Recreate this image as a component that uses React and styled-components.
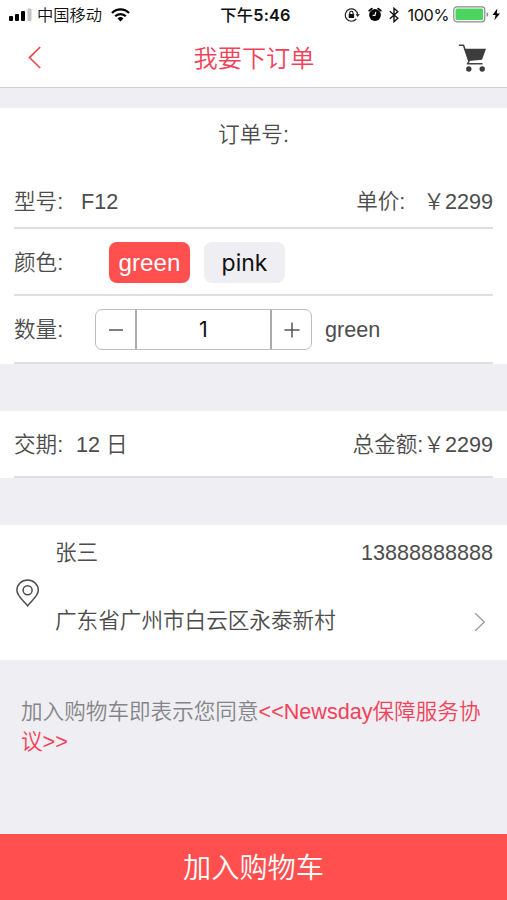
import React, { useState } from "react";
import styled, { createGlobalStyle } from "styled-components";

const red = "#ff4f4f";
const linkRed = "#f2425a";
const pageGray = "#eeeef3";
const textGray = "#4c4c4c";
const sidePadding = "14px";

const GlobalStyle = createGlobalStyle`
  body {
    margin: 0;
    background-color: ${pageGray};
  }

  * {
    box-sizing: border-box;
  }
`;

const Screen = styled.div`
  display: flex;
  flex-direction: column;
  width: 507px;
  height: 900px;
  overflow: hidden;
  background-color: ${pageGray};
  color: ${textGray};
  font-family: "Liberation Sans", "Noto Sans CJK SC", sans-serif;
  font-size: 21.6px;
  font-weight: 350;
  line-height: 30px;
  white-space: nowrap;
`;

const StatusBar = styled.div`
  display: grid;
  grid-template-columns: 1fr auto 1fr;
  align-items: center;
  height: 29px;
  flex-shrink: 0;
  padding: 0 7px 0 9px;
  background-color: #fff;
  color: #111;
  font-family: Inter, "Noto Sans CJK SC", sans-serif;
  font-size: 16.3px;
  line-height: 28px;
`;

const StatusGroup = styled.div`
  display: flex;
  align-items: center;
  justify-content: ${(props) => (props.$end ? "flex-end" : "flex-start")};
  height: 28px;

  svg {
    display: block;
    flex-shrink: 0;
  }
`;

const Carrier = styled.span`
  margin: 0 9px 0 5px;
  font-weight: 350;
`;

const Clock = styled.span`
  margin-left: 2px;
  font-weight: 500;
  letter-spacing: 0.2px;

  b {
    font-size: 16.3px;
    font-weight: 600;
  }
`;

const Percent = styled.span`
  margin: 0 4px 0 8px;
  font-size: 16.3px;
  font-weight: 400;
  letter-spacing: -0.4px;
`;

const NavBar = styled.div`
  display: flex;
  align-items: center;
  justify-content: space-between;
  height: 59px;
  flex-shrink: 0;
  padding: 0 20px 1px 28px;
  border-bottom: 1px solid #cfcfd3;
  background-color: #fff;

  svg {
    display: block;
  }
`;

const Title = styled.h1`
  margin: 2px 0 0 9px;
  color: ${linkRed};
  font-size: 24.2px;
  font-weight: 350;
  line-height: 36px;
`;

const IconButton = styled.button`
  display: flex;
  padding: 0;
  border: 0;
  background: none;
`;

const Card = styled.div`
  flex-shrink: 0;
  margin-top: ${(props) => props.$gap}px;
  padding: 0 ${sidePadding};
  background-color: #fff;
`;

const OrderNumber = styled.div`
  height: 68px;
  padding-top: 12px;
  text-align: center;
`;

const Row = styled.div`
  display: flex;
  align-items: center;
  height: ${(props) => props.$height || 67}px;
  padding-top: ${(props) => props.$top ?? 2}px;
  border-bottom: 2px solid #dfdfe1;
`;

const Label = styled.span`
  width: ${(props) => props.$width}px;
`;

const RightText = styled.span`
  margin-left: auto;
`;

const Price = styled.span`
  margin-left: 18px;
`;

const ColorOption = styled.button`
  width: 81px;
  height: 41px;
  margin-right: 14px;
  padding: ${(props) => (props.$active ? 1 : 0)}px 0 0;
  border: 0;
  border-radius: 8px;
  background-color: ${(props) => (props.$active ? red : pageGray)};
  color: ${(props) => (props.$active ? "#fff" : "#111")};
  font-family: ${(props) =>
    props.$active ? '"Liberation Sans"' : "Inter"}, sans-serif;
  font-size: ${(props) => (props.$active ? 24.2 : 23)}px;
`;

const Stepper = styled.div`
  display: flex;
  width: 217px;
  height: 41px;
  margin-right: 13px;
  border: 1.5px solid #bdbdbd;
  border-radius: 7px;
`;

const StepButton = styled.button`
  display: flex;
  align-items: center;
  justify-content: center;
  width: 39px;
  padding: 0;
  border: 0;
  background: none;
`;

const Amount = styled.div`
  flex: 1;
  border: solid #ababab;
  border-width: 0 2px;
  color: #111;
  font-family: Inter, sans-serif;
  font-size: 21.6px;
  font-weight: 400;
  line-height: 38px;
  text-align: center;
`;

const Address = styled.div`
  display: grid;
  grid-template-columns: 41px 1fr;
  align-items: center;
  height: 135px;
`;

const AddressBody = styled.div`
  display: flex;
  flex-direction: column;
  justify-content: space-between;
  height: 135px;
  padding: 13px 0 24px;
`;

const AddressLine = styled.div`
  display: flex;
  align-items: center;
  justify-content: space-between;
`;

const ArrowBox = styled.span`
  display: flex;
  margin: 1px 7px 0 0;
`;

const Agreement = styled.p`
  flex: 1;
  margin: 0;
  padding: 37px 22px 0 21px;
  color: #858588;
  white-space: normal;
  word-break: break-all;
`;

const AgreementLink = styled.span`
  color: ${linkRed};
`;

const SubmitButton = styled.button`
  height: 66px;
  flex-shrink: 0;
  padding: 0 0 3px;
  border: 0;
  background-color: ${red};
  color: #fff;
  font-family: inherit;
  font-size: 28.2px;
  font-weight: 350;
`;

const SignalIcon = () => (
  <svg width="23" height="14" viewBox="0 0 23 14">
    <rect x="0" y="8" width="4" height="5" rx="1" fill="#000" />
    <rect x="6" y="6" width="4" height="7" rx="1" fill="#000" />
    <rect x="12" y="3" width="4" height="10" rx="1" fill="#000" />
    <rect x="18.5" y="0.5" width="4" height="12.5" rx="1" fill="#c4c4c4" />
  </svg>
);

const WifiIcon = () => (
  <svg width="19" height="14" viewBox="0 0 19 14">
    <g fill="none" stroke="#000" strokeWidth="2.3">
      <path d="M1 5a12 12 0 0 1 17 0" />
      <path d="M4.2 8.3a7.5 7.5 0 0 1 10.6 0" />
    </g>
    <path d="M6.6 10.5a4.1 4.1 0 0 1 5.8 0L9.5 13.5Z" fill="#000" />
  </svg>
);

const LockIcon = () => (
  <svg width="16" height="16" viewBox="0 0 16 16">
    <path
      d="M12.3 12a6.2 6.2 0 1 1 1.4-4.2"
      fill="none"
      stroke="#222"
      strokeWidth="1.2"
    />
    <path d="M11.6 7.2h4.2l-2.1 2.9Z" fill="#222" />
    <rect x="4.7" y="7" width="5.4" height="4" rx="0.5" fill="#111" />
    <path
      d="M5.8 7V5.8a1.6 1.6 0 0 1 3.2 0V7"
      fill="none"
      stroke="#111"
      strokeWidth="1.1"
    />
  </svg>
);

const AlarmIcon = () => (
  <svg width="14" height="15" viewBox="0 0 14 15">
    <circle cx="7" cy="8" r="5.9" fill="#000" />
    <path
      d="M1.2 3.6 3.8 1.6M12.8 3.6 10.2 1.6"
      stroke="#000"
      strokeWidth="1.8"
      strokeLinecap="round"
    />
    <path d="M7.8 5 7 8.3H4.6" fill="none" stroke="#fff" strokeWidth="1.2" />
  </svg>
);

const BluetoothIcon = () => (
  <svg width="10" height="16" viewBox="0 0 10 16">
    <path
      d="M0.8 4.2 8.8 11.2 5 14.7V1.3l3.8 3.5-8 7"
      fill="none"
      stroke="#111"
      strokeWidth="1.4"
    />
  </svg>
);

const BatteryIcon = () => (
  <svg width="47" height="17" viewBox="0 0 47 17">
    <rect
      x="0.8"
      y="0.8"
      width="31"
      height="15"
      rx="3"
      fill="#fff"
      stroke="#8b8b8b"
      strokeWidth="1.2"
    />
    <rect x="2.5" y="2.6" width="27.6" height="11.4" rx="1.5" fill="#4cd55e" />
    <path d="M33.6 6v5q1.6-.8 1.6-2.5T33.6 6Z" fill="#8b8b8b" />
    <path d="M44.3 2.5 39.6 9h3l-1.2 5.3L47 7.4h-3.2Z" fill="#000" />
  </svg>
);

const BackIcon = () => (
  <svg width="13" height="23" viewBox="0 0 13 23">
    <path
      d="M12.2 1 1.5 11.6 12.2 22"
      fill="none"
      stroke="#ea4545"
      strokeWidth="1.6"
    />
  </svg>
);

const CartIcon = () => (
  <svg width="29" height="28" viewBox="0 0 29 28">
    <path
      d="M0.8 1.2H5.5L11 17.3l-1.5 2.5H24.5"
      fill="none"
      stroke="#444"
      strokeWidth="1.6"
      strokeLinejoin="round"
    />
    <path d="M6.3 4.7H28L24 15.8 10.3 17Z" fill="#3c3c3c" />
    <circle cx="10.8" cy="25" r="2.7" fill="#3c3c3c" />
    <circle cx="24.2" cy="25" r="2.7" fill="#3c3c3c" />
  </svg>
);

const StepIcon = ({ plus }) => (
  <svg width="16" height="16" viewBox="0 0 16 16">
    <path
      d={plus ? "M0.5 8h15M8 0.5v15" : "M1 8h14"}
      stroke="#555"
      strokeWidth="1.5"
    />
  </svg>
);

const PinIcon = () => (
  <svg width="27" height="28" viewBox="0 0 27 28">
    <g fill="none" stroke="#4c4c4c" strokeWidth="1.5">
      <path d="M13.6 26.8C10.6 22.4 2.9 17.5 2.9 11.3a10.7 10.3 0 0 1 21.4 0c0 6.2-7.7 11.1-10.7 15.5Z" />
      <circle cx="13.6" cy="11.2" r="4.5" />
    </g>
  </svg>
);

const ArrowIcon = () => (
  <svg width="12" height="20" viewBox="0 0 12 20">
    <path
      d="M1.2 1.2 10.3 10 1.2 18.8"
      fill="none"
      stroke="#999"
      strokeWidth="1.3"
    />
  </svg>
);

const Gap = styled.span`
  width: ${(props) => props.$width}px;
`;

const colors = ["green", "pink"];

const App = () => {
  const [selected, setSelected] = useState("green");
  const [count, setCount] = useState(1);

  return (
    <>
      <GlobalStyle />
      <Screen>
        <StatusBar>
          <StatusGroup>
            <SignalIcon />
            <Carrier>中国移动</Carrier>
            <WifiIcon />
          </StatusGroup>
          <Clock>
            下午<b>5:46</b>
          </Clock>
          <StatusGroup $end>
            <LockIcon />
            <Gap $width={8} />
            <AlarmIcon />
            <Gap $width={7} />
            <BluetoothIcon />
            <Percent>100%</Percent>
            <BatteryIcon />
          </StatusGroup>
        </StatusBar>
        <NavBar>
          <IconButton>
            <BackIcon />
          </IconButton>
          <Title>我要下订单</Title>
          <IconButton>
            <CartIcon />
          </IconButton>
        </NavBar>
        <Card $gap={20}>
          <OrderNumber>订单号:</OrderNumber>
          <Row $height={53} $top={1}>
            <Label $width={67}>型号:</Label>
            <span>F12</span>
            <RightText>
              单价:<Price>￥2299</Price>
            </RightText>
          </Row>
          <Row>
            <Label $width={95}>颜色:</Label>
            {colors.map((color) => (
              <ColorOption
                key={color}
                $active={color === selected}
                onClick={() => setSelected(color)}
              >
                {color}
              </ColorOption>
            ))}
          </Row>
          <Row $height={68} $top={1}>
            <Label $width={81}>数量:</Label>
            <Stepper>
              <StepButton onClick={() => setCount(Math.max(1, count - 1))}>
                <StepIcon />
              </StepButton>
              <Amount>{count}</Amount>
              <StepButton onClick={() => setCount(count + 1)}>
                <StepIcon plus />
              </StepButton>
            </Stepper>
            <span>{selected}</span>
          </Row>
        </Card>
        <Card $gap={47}>
          <Row>
            <Label $width={62}>交期:</Label>
            <span>12 日</span>
            <RightText>总金额:￥2299</RightText>
          </Row>
        </Card>
        <Card $gap={47}>
          <Address>
            <PinIcon />
            <AddressBody>
              <AddressLine>
                <span>张三</span>
                <span>13888888888</span>
              </AddressLine>
              <AddressLine>
                <span>广东省广州市白云区永泰新村</span>
                <ArrowBox>
                  <ArrowIcon />
                </ArrowBox>
              </AddressLine>
            </AddressBody>
          </Address>
        </Card>
        <Agreement>
          加入购物车即表示您同意
          <AgreementLink>&lt;&lt;Newsday保障服务协议&gt;&gt;</AgreementLink>
        </Agreement>
        <SubmitButton>加入购物车</SubmitButton>
      </Screen>
    </>
  );
};

export default App;
